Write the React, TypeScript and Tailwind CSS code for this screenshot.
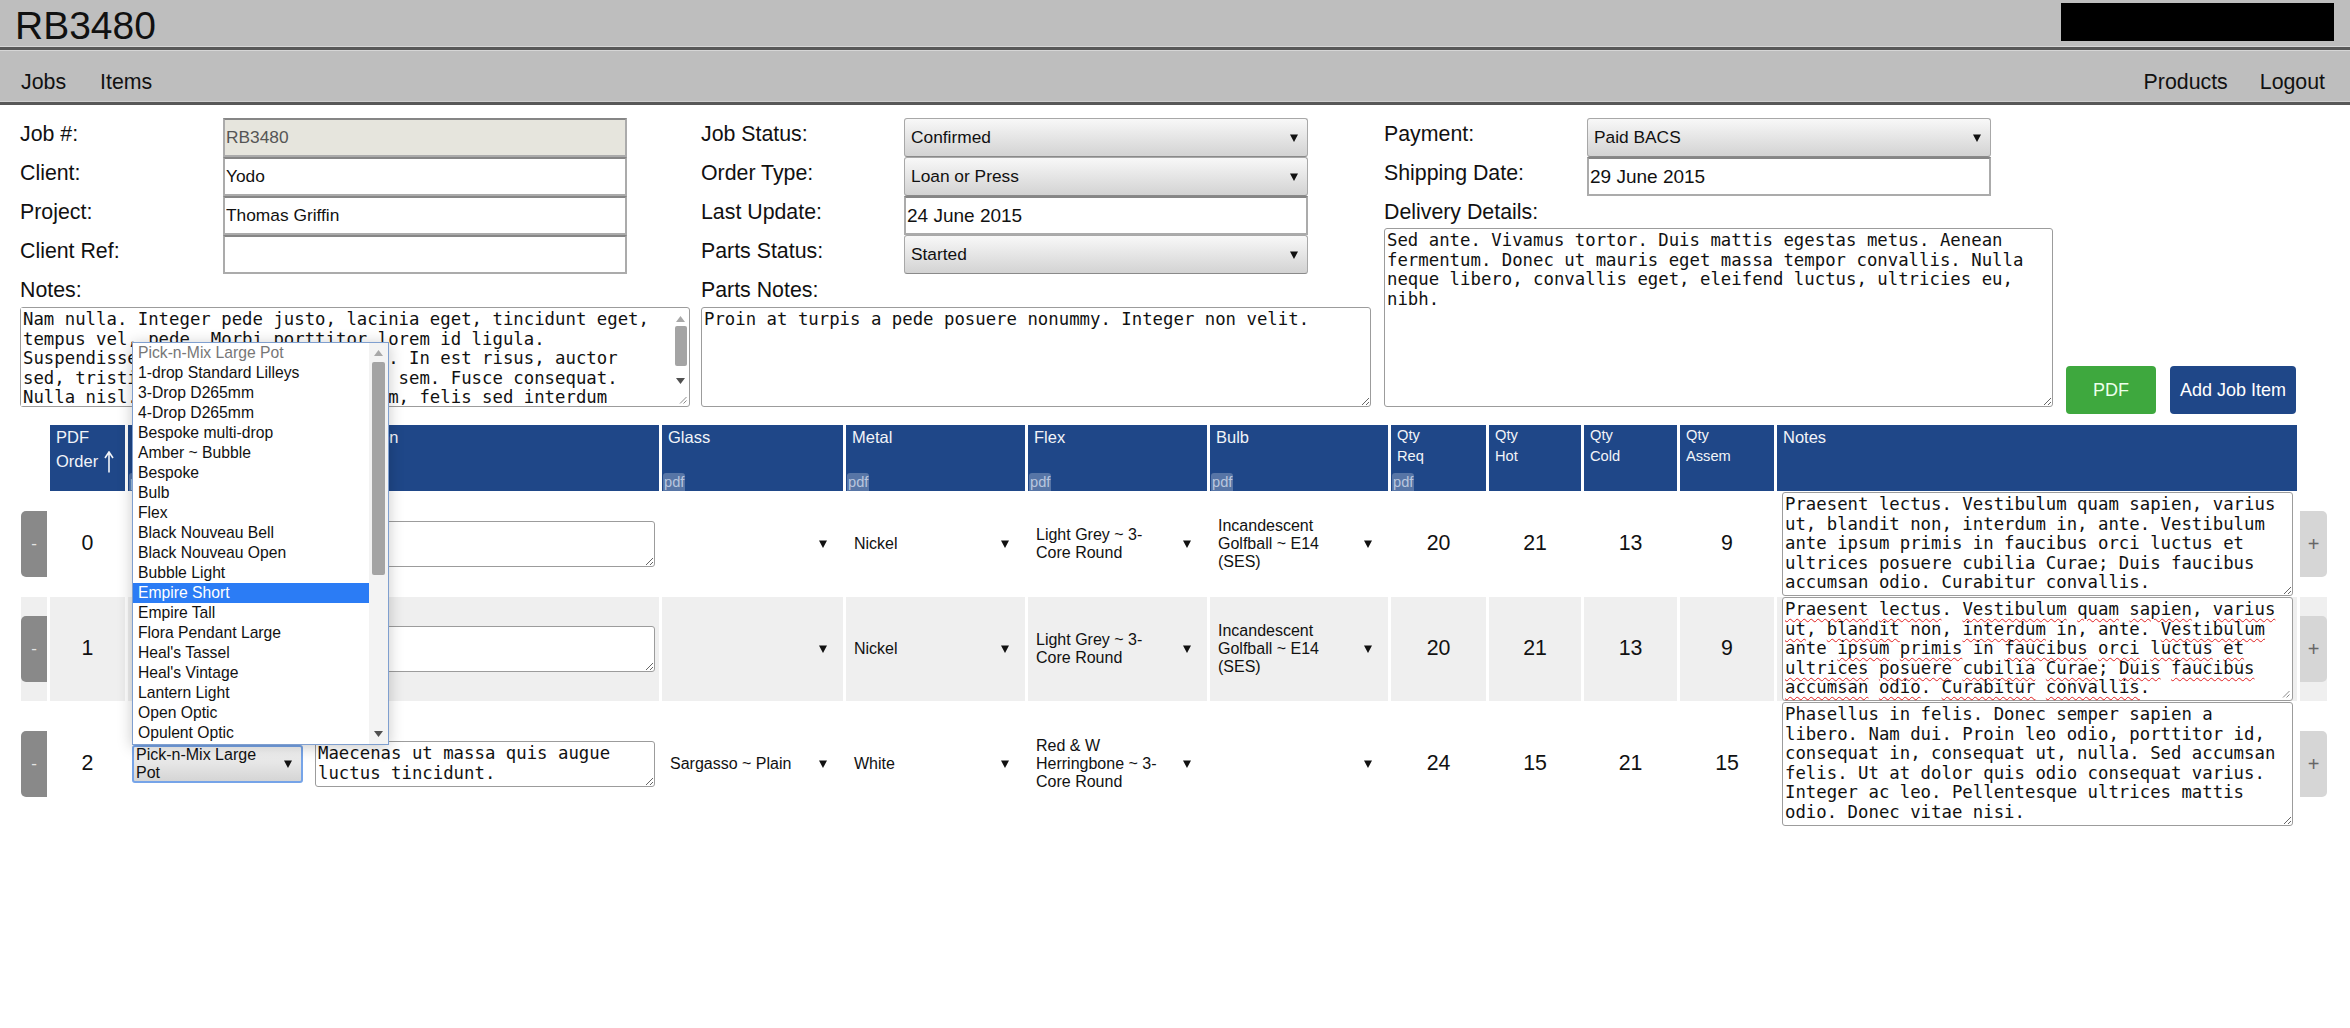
import React from "react";

const sans = "font-['Liberation_Sans',Arial,sans-serif]";
const mono = "font-['DejaVu_Sans_Mono',monospace]";

function Caret() {
  return (
    <svg width="8" height="8" viewBox="0 0 8 8" className="shrink-0">
      <path d="M0 0.5 H8 L4 8 Z" fill="#111" />
    </svg>
  );
}

function Grip() {
  return (
    <svg width="10" height="10" viewBox="0 0 10 10" className="absolute bottom-[2px] right-[2px]">
      <path d="M9.5 3 L3 9.5 M9.5 6.5 L6.5 9.5" stroke="#8a8a8a" strokeWidth="1" />
    </svg>
  );
}

function Label({ children }: { children: React.ReactNode }) {
  return <div className="w-[203px] shrink-0 text-[21.33px] leading-[32px]">{children}</div>;
}

function TextInput({ value, readOnly, date }: { value: string; readOnly?: boolean; date?: boolean }) {
  return (
    <input
      readOnly
      defaultValue={value}
      className={`h-[39px] w-[404px] border-2 border-[#ababab] border-t-[#868686] px-px outline-none ${
        date ? "text-[19px]" : "text-[17.33px]"
      } ${readOnly ? "bg-[#e6e5dd] text-[#555]" : "bg-white text-[#111]"}`}
    />
  );
}

function FormSelect({ value }: { value: string }) {
  return (
    <div className="flex h-[39px] w-[404px] items-center justify-between rounded-[3px] border border-[#a8a8a8] border-b-[#8a8a8a] bg-linear-to-b from-[#f8f8f8] to-[#d3d3d3] pl-[6px] pr-[9px] text-[17.33px]">
      <span>{value}</span>
      <Caret />
    </div>
  );
}

function Field({ label, children }: { label: string; children: React.ReactNode }) {
  return (
    <div className="flex h-[39px]">
      <Label>{label}</Label>
      {children}
    </div>
  );
}

const notesText =
  "Nam nulla. Integer pede justo, lacinia eget, tincidunt eget,\ntempus vel, pede. Morbi porttitor lorem id ligula.\nSuspendisse ornare consequat lectus. In est risus, auctor\nsed, tristique in, tempus sit amet, sem. Fusce consequat.\nNulla nisl. Nunc nisl. Duis bibendum, felis sed interdum\nvenenatis, turpis enim blandit mi, in porttitor pede justo\neu massa.";

const praesent =
  "Praesent lectus. Vestibulum quam sapien, varius\nut, blandit non, interdum in, ante. Vestibulum\nante ipsum primis in faucibus orci luctus et\nultrices posuere cubilia Curae; Duis faucibus\naccumsan odio. Curabitur convallis.";

const phasellus =
  "Phasellus in felis. Donec semper sapien a\nlibero. Nam dui. Proin leo odio, porttitor id,\nconsequat in, consequat ut, nulla. Sed accumsan\nfelis. Ut at dolor quis odio consequat varius.\nInteger ac leo. Pellentesque ultrices mattis\nodio. Donec vitae nisi.";

const ta = `${mono} text-[17.33px] leading-[19.6px] text-[#111] bg-white border border-[#9c9c9c] rounded-[3px] p-[2px] outline-none`;

const okWords = new Set(["non", "in", "ante"]);
function Spell({ text }: { text: string }) {
  const parts = text.split(/([A-Za-z]+)/);
  return (
    <>
      {parts.map((p, i) =>
        /^[A-Za-z]+$/.test(p) && !okWords.has(p) ? (
          <span key={i} className="underline decoration-[#e01b1b] decoration-wavy decoration-1 underline-offset-[3px]">
            {p}
          </span>
        ) : (
          <React.Fragment key={i}>{p}</React.Fragment>
        )
      )}
    </>
  );
}

function Th({
  children,
  pdf,
  small,
}: {
  children?: React.ReactNode;
  pdf?: boolean;
  small?: boolean;
}) {
  return (
    <div className="flex h-[66px] flex-col justify-between bg-[#1f4788] text-[#f2f4f8]">
      <div className={small ? "px-[6px] text-[14.67px] leading-[21px]" : "px-[6px] text-[16.5px] leading-[24px]"}>
        {children}
      </div>
      {pdf && (
        <span className="ml-px self-start rounded-t-[3px] bg-white/25 px-px text-[14.67px] leading-[18px] text-[#b9c6de]">
          pdf
        </span>
      )}
    </div>
  );
}

function CellSelect({ text }: { text: string }) {
  return (
    <div className="flex w-full items-center justify-between pl-[8px] pr-[16px]">
      <span className="w-[132px] text-[16px] leading-[18.3px]">{text}</span>
      <Caret />
    </div>
  );
}

const dropItems = [
  "Pick-n-Mix Large Pot",
  "1-drop Standard Lilleys",
  "3-Drop D265mm",
  "4-Drop D265mm",
  "Bespoke multi-drop",
  "Amber ~ Bubble",
  "Bespoke",
  "Bulb",
  "Flex",
  "Black Nouveau Bell",
  "Black Nouveau Open",
  "Bubble Light",
  "Empire Short",
  "Empire Tall",
  "Flora Pendant Large",
  "Heal's Tassel",
  "Heal's Vintage",
  "Lantern Light",
  "Open Optic",
  "Opulent Optic",
];

const rows = [
  {
    order: 0,
    product: "Empire Short",
    desc: "",
    glass: "",
    metal: "Nickel",
    flex: "Light Grey ~ 3-Core Round",
    bulb: "Incandescent Golfball ~ E14 (SES)",
    qty: [20, 21, 13, 9],
    notes: praesent,
    h: "h-[104px]",
  },
  {
    order: 1,
    product: "Empire Short",
    desc: "",
    glass: "",
    metal: "Nickel",
    flex: "Light Grey ~ 3-Core Round",
    bulb: "Incandescent Golfball ~ E14 (SES)",
    qty: [20, 21, 13, 9],
    notes: praesent,
    h: "h-[104px]",
  },
  {
    order: 2,
    product: "Pick-n-Mix Large Pot",
    desc: "Maecenas ut massa quis augue\nluctus tincidunt.",
    glass: "Sargasso ~ Plain",
    metal: "White",
    flex: "Red & W Herringbone ~ 3-Core Round",
    bulb: "",
    qty: [24, 15, 21, 15],
    notes: phasellus,
    h: "h-[124px]",
  },
];

export default function App() {
  return (
    <div className={`relative min-h-screen w-full bg-white text-[#111] ${sans}`}>
      {/* top bar */}
      <div className="flex h-[46px] items-start justify-between bg-[#bebebe]">
        <div className="pl-[15px] pt-[6px] text-[39px] leading-none">RB3480</div>
        <div className="mr-[16px] mt-[3px] h-[38px] w-[273px] bg-black" />
      </div>
      <div className="h-px bg-[#d6d6d6]" />
      <div className="h-[3px] bg-[#585858]" />
      <div className="h-px bg-[#d6d6d6]" />
      <nav className="flex h-[50px] justify-between bg-[#bebebe] px-[21px] pt-[21px] text-[21.33px] leading-none">
        <div className="flex gap-[34px]">
          <a href="#">Jobs</a>
          <a href="#">Items</a>
        </div>
        <div className="flex gap-[32px] pr-[4px]">
          <a href="#">Products</a>
          <a href="#">Logout</a>
        </div>
      </nav>
      <div className="h-px bg-[#d0d0d0]" />
      <div className="h-[3px] bg-[#585858]" />

      {/* job form */}
      <div className="flex pl-[20px] pt-[13px]">
        <div className="w-[670px] pb-[7px]">
          <Field label="Job #:">
            <TextInput value="RB3480" readOnly />
          </Field>
          <Field label="Client:">
            <TextInput value="Yodo" />
          </Field>
          <Field label="Project:">
            <TextInput value="Thomas Griffin" />
          </Field>
          <Field label="Client Ref:">
            <TextInput value="" />
          </Field>
          <div className="h-[33px] text-[21.33px] leading-[33px]">Notes:</div>
          <div className="flex h-[100px] w-[670px] rounded-[3px] border border-[#9c9c9c] bg-white">
            <textarea
              defaultValue={notesText}
              className={`${mono} h-full flex-1 resize-none overflow-hidden bg-white p-[2px] text-[17.33px] leading-[19.6px] text-[#111] outline-none`}
            />
            <div className="relative flex w-[17px] flex-col items-center">
              <svg width="9" height="6" viewBox="0 0 9 6" className="mt-[8px]">
                <path d="M0 6 L4.5 0 L9 6 Z" fill="#a8a8a8" />
              </svg>
              <div className="mt-[4px] h-[40px] w-[12px] rounded-[2px] bg-[#a4a4a4]" />
              <div className="flex-1" />
              <svg width="9" height="6" viewBox="0 0 9 6" className="mb-[22px]">
                <path d="M0 0 L9 0 L4.5 6 Z" fill="#505050" />
              </svg>
              <Grip />
            </div>
          </div>
        </div>

        <div className="ml-[11px] w-[670px] pb-[7px]">
          <Field label="Job Status:">
            <FormSelect value="Confirmed" />
          </Field>
          <Field label="Order Type:">
            <FormSelect value="Loan or Press" />
          </Field>
          <Field label="Last Update:">
            <TextInput value="24 June 2015" date />
          </Field>
          <Field label="Parts Status:">
            <FormSelect value="Started" />
          </Field>
          <div className="h-[33px] text-[21.33px] leading-[33px]">Parts Notes:</div>
          <textarea
            defaultValue="Proin at turpis a pede posuere nonummy. Integer non velit."
            className={`${ta} block h-[100px] w-[670px]`}
          />
        </div>

        <div className="ml-[13px] w-[669px] pb-[7px]">
          <Field label="Payment:">
            <FormSelect value="Paid BACS" />
          </Field>
          <Field label="Shipping Date:">
            <TextInput value="29 June 2015" date />
          </Field>
          <div className="h-[32px] text-[21.33px] leading-[32px]">Delivery Details:</div>
          <textarea
            defaultValue={
              "Sed ante. Vivamus tortor. Duis mattis egestas metus. Aenean\nfermentum. Donec ut mauris eget massa tempor convallis. Nulla\nneque libero, convallis eget, eleifend luctus, ultricies eu,\nnibh."
            }
            className={`${ta} block h-[179px] w-[669px]`}
          />
        </div>

        <div className="ml-[13px] flex items-end gap-[14px]">
          <button className="h-[48px] w-[90px] rounded-[4px] bg-[#3ea83e] text-[18px] text-[#ecffec]">PDF</button>
          <button className="h-[48px] w-[126px] rounded-[4px] bg-[#1f4788] text-[18px] text-white">Add Job Item</button>
        </div>
      </div>

      {/* job items */}
      <div className="mt-[11px] grid grid-cols-[26px_75px_179px_349px_181px_179px_179px_178px_95px_92px_93px_94px_520px_27px] gap-x-[3px] gap-y-px pl-[21px]">
        <div />
        <Th>
          PDF
          <br />
          Order
          <svg width="10" height="22" viewBox="0 0 10 22" className="ml-[6px] inline-block align-[-6px]">
            <path d="M5 21.5 V1.5 M1 7 L5 1 L9 7" stroke="#f2f4f8" strokeWidth="1.6" fill="none" />
          </svg>
        </Th>
        <Th pdf>Product</Th>
        <Th>Description</Th>
        <Th pdf>Glass</Th>
        <Th pdf>Metal</Th>
        <Th pdf>Flex</Th>
        <Th pdf>Bulb</Th>
        <Th pdf small>
          Qty
          <br />
          Req
        </Th>
        <Th small>
          Qty
          <br />
          Hot
        </Th>
        <Th small>
          Qty
          <br />
          Cold
        </Th>
        <Th small>
          Qty
          <br />
          Assem
        </Th>
        <Th>Notes</Th>
        <div />

        {rows.map((r, i) => {
          const bg = i === 1 ? "bg-[#efefef]" : "bg-white";
          return (
            <React.Fragment key={r.order}>
              <div className={`${bg} flex items-center`}>
                <button className="h-[66px] w-full rounded-l-[5px] bg-[#898989] text-[17px] text-[#e4e4e4]">-</button>
              </div>
              <div className={`${bg} flex items-center justify-center text-[21.33px]`}>{r.order}</div>
              <div className={`${bg} flex items-center px-[4px]`}>
                <div
                  className={`flex h-[38px] w-[171px] items-center justify-between rounded-[3px] bg-linear-to-b from-[#f6f6f6] to-[#d5d5d5] pl-[2px] pr-[9px] ${
                    i === 2 ? "border-2 border-[#76a4e8]" : "border border-[#a8a8a8]"
                  }`}
                >
                  <span className="w-[132px] text-[16px] leading-[18.3px]">{r.product}</span>
                  <Caret />
                </div>
              </div>
              <div className={`${bg} flex items-center pl-[5px]`}>
                <textarea defaultValue={r.desc} className={`${ta} block h-[46px] w-[340px]`} />
              </div>
              <div className={`${bg} flex items-center`}>
                <CellSelect text={r.glass} />
              </div>
              <div className={`${bg} flex items-center`}>
                <CellSelect text={r.metal} />
              </div>
              <div className={`${bg} flex items-center`}>
                <CellSelect text={r.flex} />
              </div>
              <div className={`${bg} flex items-center`}>
                <CellSelect text={r.bulb} />
              </div>
              {r.qty.map((q, k) => (
                <div key={k} className={`${bg} flex items-center justify-center text-[21.33px]`}>
                  {q}
                </div>
              ))}
              <div className={`${bg} flex items-center pl-[5px]`}>
                {i === 1 ? (
                  <div className={`${ta} relative ${r.h} w-[511px] whitespace-pre-wrap`}>
                    <Spell text={r.notes} />
                    <Grip />
                  </div>
                ) : (
                  <textarea defaultValue={r.notes} className={`${ta} block ${r.h} w-[511px]`} />
                )}
              </div>
              <div className={`${bg} flex items-center`}>
                <button className="h-[66px] w-full rounded-r-[5px] bg-[#d6d6d6] text-[20px] text-[#666]">+</button>
              </div>
            </React.Fragment>
          );
        })}
      </div>

      {/* open product list */}
      <div className="absolute left-[132px] top-[342px] flex h-[403px] w-[257px] border border-[#7f9fcf] bg-white shadow-[0_2px_14px_rgba(0,0,0,0.22)]">
        <div className="flex flex-1 flex-col">
          {dropItems.map((it, k) => (
            <div
              key={it}
              className={`h-[20px] pl-[5px] text-[15.7px] leading-[20px] ${
                k === 12 ? "bg-[#2b7cf5] text-white" : k === 0 ? "text-[#777]" : "text-[#111]"
              }`}
            >
              {it}
            </div>
          ))}
        </div>
        <div className="flex w-[19px] flex-col items-center bg-[#f3f3f3]">
          <svg width="9" height="6" viewBox="0 0 9 6" className="mt-[7px]">
            <path d="M0 6 L4.5 0 L9 6 Z" fill="#a8a8a8" />
          </svg>
          <div className="mt-[6px] h-[213px] w-[13px] rounded-[2px] bg-[#a4a4a4]" />
          <div className="flex-1" />
          <svg width="9" height="6" viewBox="0 0 9 6" className="mb-[7px]">
            <path d="M0 0 L9 0 L4.5 6 Z" fill="#505050" />
          </svg>
        </div>
      </div>
    </div>
  );
}
